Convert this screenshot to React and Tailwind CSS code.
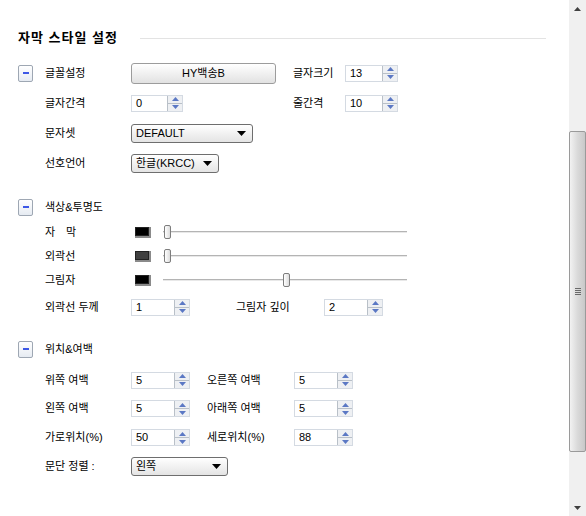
// App.jsx - 자막 스타일 설정 패널

const font = { fontFamily: '"Liberation Sans", "Noto Sans CJK KR", sans-serif' };

// 섹션 접기 버튼 (파란 마이너스)
function Minus() {
  return (
    <div className="flex h-[17px] w-[15px] items-center justify-center rounded-[2px] border border-[#9ea7b3] bg-gradient-to-b from-white to-[#e6ebf2]">
      <span className="h-[2px] w-[6px] bg-[#3d58e6]"></span>
    </div>
  );
}

// 숫자 입력 + 위/아래 버튼
function Spinner({ value, w = "w-[59px]" }) {
  return (
    <div className={`flex h-[17px] ${w} items-stretch border border-[#d4dae2] bg-white`}>
      <span className="flex flex-1 items-center pl-[4px] text-[11px] text-black">{value}</span>
      <div className="flex w-[15px] flex-col border-l border-[#b9c0c8]">
        <div className="flex flex-1 items-center justify-center border-b border-[#b9c0c8] bg-[#eef0f3]">
          <svg width="7" height="4" viewBox="0 0 7 4"><path d="M3.5 0L7 4H0z" fill="#5b78c4" /></svg>
        </div>
        <div className="flex flex-1 items-center justify-center bg-[#eef0f3]">
          <svg width="7" height="4" viewBox="0 0 7 4"><path d="M0 0h7L3.5 4z" fill="#5b78c4" /></svg>
        </div>
      </div>
    </div>
  );
}

// 드롭다운
function Select({ value, w }) {
  return (
    <div className={`flex h-[19px] ${w} items-center justify-between rounded-[3px] border border-[#6e6e6e] bg-gradient-to-b from-white to-[#e4e4e4] pl-[4px] pr-[6px] text-[11px] text-black`}>
      <span>{value}</span>
      <svg width="9" height="5" viewBox="0 0 9 5"><path d="M0 0h9L4.5 5z" fill="#000" /></svg>
    </div>
  );
}

// 색상 견본
function Swatch({ color }) {
  return (
    <div className="ml-[4px] h-[11px] w-[16px] border-b-2 border-r-2 border-[#8a8a8a]">
      <div className={`h-full w-full border border-[#222] ${color}`}></div>
    </div>
  );
}

// 투명도 슬라이더
function Slider({ pos }) {
  return (
    <div className="relative ml-[12px] flex h-[16px] w-[244px] items-center">
      <div className="h-[2px] w-full border-t border-[#b4b4b4] bg-[#e8e8e8]"></div>
      <div
        className="absolute top-[1px] h-[14px] w-[7px] rounded-[2px] border border-[#7d7d7d] bg-gradient-to-r from-white to-[#dcdcdc]"
        style={{ left: pos }}
      ></div>
    </div>
  );
}

function Row({ minus, label, children, h = "h-[30px]" }) {
  return (
    <div className={`flex ${h} items-center`}>
      <div className="w-[27px]">{minus && <Minus />}</div>
      <div className="w-[86px] text-[11px] text-black">{label}</div>
      {children}
    </div>
  );
}

export default function App() {
  return (
    <div className="flex h-[516px] w-[586px] overflow-hidden bg-white" style={font}>
      <div className="flex-1 pl-[18px]">
        {/* 제목 */}
        <div className="h-[58px] pr-[23px] pt-[31px]">
          <div className="flex items-center">
            <h2 className="text-[13px] font-bold leading-[14px] tracking-[1px] text-black">자막 스타일 설정</h2>
            <div className="ml-[22px] h-px flex-1 bg-[#e3e3e3]"></div>
          </div>
        </div>

        {/* 글꼴 */}
        <div>
          <Row minus label="글꼴설정">
            <div className="w-[162px]">
              <div className="flex h-[21px] w-[145px] items-center justify-center rounded-[3px] border border-[#9c9c9c] bg-gradient-to-b from-white to-[#e2e2e2] text-[11px] text-black">
                HY백송B
              </div>
            </div>
            <div className="w-[52px] text-[11px]">글자크기</div>
            <Spinner value="13" w="w-[53px]" />
          </Row>
          <Row label="글자간격">
            <div className="w-[162px]">
              <Spinner value="0" w="w-[52px]" />
            </div>
            <div className="w-[52px] text-[11px]">줄간격</div>
            <Spinner value="10" w="w-[53px]" />
          </Row>
          <Row label="문자셋">
            <Select value="DEFAULT" w="w-[122px]" />
          </Row>
          <Row label="선호언어">
            <Select value="한글(KRCC)" w="w-[88px]" />
          </Row>
        </div>

        {/* 색상 & 투명도 */}
        <div className="mt-[16px]">
          <Row minus label="색상&투명도" h="h-[26px]" />
          <Row label="자　막" h="h-[24px]">
            <Swatch color="bg-black" />
            <Slider pos="1px" />
          </Row>
          <Row label="외곽선" h="h-[24px]">
            <Swatch color="bg-[#404040]" />
            <Slider pos="1px" />
          </Row>
          <Row label="그림자" h="h-[24px]">
            <Swatch color="bg-black" />
            <Slider pos="120px" />
          </Row>
          <Row label="외곽선 두께" h="h-[30px]">
            <div className="w-[105px]">
              <Spinner value="1" />
            </div>
            <div className="w-[88px] text-[11px]">그림자 깊이</div>
            <Spinner value="2" />
          </Row>
        </div>

        {/* 위치 & 여백 */}
        <div className="mt-[14px]">
          <Row minus label="위치&여백" h="h-[26px]" />
          <div className="h-[4px]"></div>
          <Row label="위쪽 여백" h="h-[28px]">
            <div className="w-[76px]">
              <Spinner value="5" />
            </div>
            <div className="w-[87px] text-[11px]">오른쪽 여백</div>
            <Spinner value="5" />
          </Row>
          <Row label="왼쪽 여백" h="h-[29px]">
            <div className="w-[76px]">
              <Spinner value="5" />
            </div>
            <div className="w-[87px] text-[11px]">아래쪽 여백</div>
            <Spinner value="5" />
          </Row>
          <Row label="가로위치(%)" h="h-[29px]">
            <div className="w-[76px]">
              <Spinner value="50" />
            </div>
            <div className="w-[87px] text-[11px]">세로위치(%)</div>
            <Spinner value="88" />
          </Row>
          <Row label="문단 정렬 :" h="h-[28px]">
            <Select value="왼쪽" w="w-[97px]" />
          </Row>
        </div>
      </div>

      {/* 스크롤바 */}
      <div className="flex w-[17px] flex-col bg-[#f0f0f0]">
        <div className="flex h-[17px] items-center justify-center">
          <svg width="7" height="4" viewBox="0 0 7 4"><path d="M3.5 0L7 4H0z" fill="#404040" /></svg>
        </div>
        <div className="h-[114px]"></div>
        <div className="flex h-[321px] items-center justify-center rounded-[2px] border border-[#9a9a9a] bg-gradient-to-r from-[#f2f2f2] via-[#dadada] to-[#c8c8c8]">
          <div className="flex flex-col gap-[1px]">
            <span className="h-px w-[6px] bg-[#6a6a6a]"></span>
            <span className="h-px w-[6px] bg-[#6a6a6a]"></span>
            <span className="h-px w-[6px] bg-[#6a6a6a]"></span>
            <span className="h-px w-[6px] bg-[#6a6a6a]"></span>
          </div>
        </div>
        <div className="flex-1"></div>
        <div className="flex h-[17px] items-center justify-center">
          <svg width="7" height="4" viewBox="0 0 7 4"><path d="M0 0h7L3.5 4z" fill="#404040" /></svg>
        </div>
      </div>
    </div>
  );
}
